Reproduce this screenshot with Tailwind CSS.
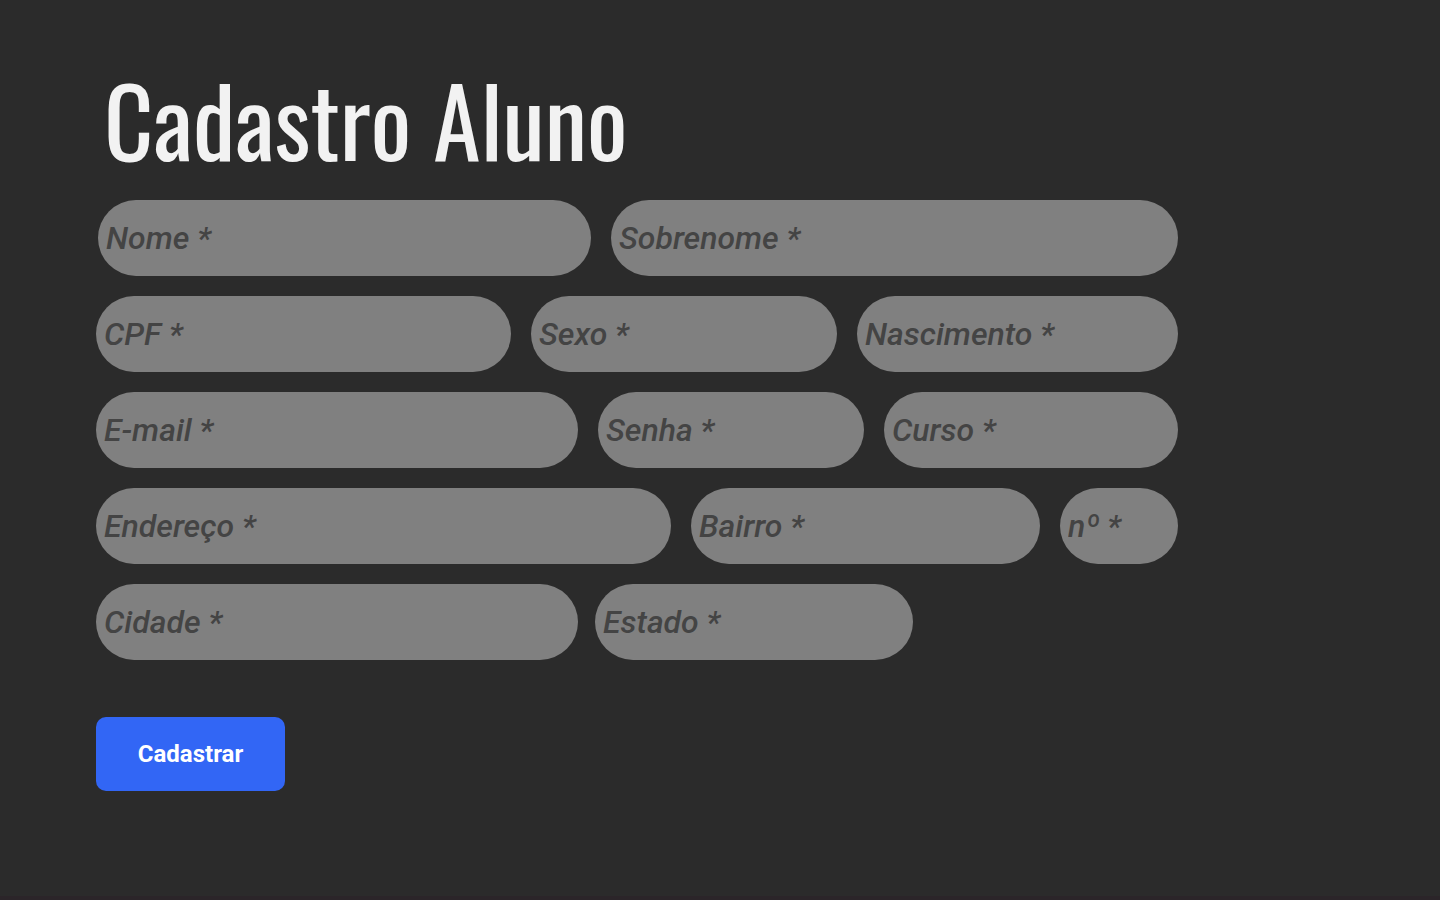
<!DOCTYPE html>
<html lang="pt-BR">
<head>
<meta charset="utf-8">
<meta name="viewport" content="width=device-width, initial-scale=1">
<title>Cadastro Aluno</title>
<script src="https://cdn.jsdelivr.net/npm/@tailwindcss/browser@4"></script>
</head>
<body class="min-h-screen bg-[#2b2b2b] font-['Roboto',sans-serif]">
<main class="min-h-screen border-b-4 border-[#2b2529] px-24 pt-[70px] pb-24">
<h1 class="pl-2 text-8xl leading-[96px] font-normal text-[#f2f2f2] font-['Oswald','Liberation_Sans_Narrow','Liberation_Sans',sans-serif]">Cadastro Aluno</h1>
<form class="mt-[34px] flex max-w-[1082px] flex-col items-start">
<div class="flex w-full flex-col gap-5 [&_input]:h-19 [&_input]:min-w-0 [&_input]:rounded-full [&_input]:bg-[#808080] [&_input]:px-2 [&_input]:text-[32px] [&_input]:font-medium [&_input]:text-[#444444] [&_input]:italic [&_input]:placeholder:text-[#444444]">
<div class="flex gap-5 pl-0.5">
<input type="text" aria-label="Nome" placeholder="Nome *" class="w-[493px]">
<input type="text" aria-label="Sobrenome" placeholder="Sobrenome *" class="flex-1">
</div>
<div class="flex gap-5">
<input type="text" aria-label="CPF" placeholder="CPF *" class="w-[415px]">
<input type="text" aria-label="Sexo" placeholder="Sexo *" class="w-[306px]">
<input type="text" aria-label="Nascimento" placeholder="Nascimento *" class="flex-1">
</div>
<div class="flex gap-5">
<input type="email" aria-label="E-mail" placeholder="E-mail *" class="w-[482px]">
<input type="password" aria-label="Senha" placeholder="Senha *" class="w-[266px]">
<input type="text" aria-label="Curso" placeholder="Curso *" class="flex-1">
</div>
<div class="flex gap-5">
<input type="text" aria-label="Endereço" placeholder="Endereço *" class="w-[575px]">
<input type="text" aria-label="Bairro" placeholder="Bairro *" class="w-[349px]">
<input type="text" aria-label="Número" placeholder="nº *" class="flex-1">
</div>
<div class="flex gap-[17px]">
<input type="text" aria-label="Cidade" placeholder="Cidade *" class="w-[482px]">
<input type="text" aria-label="Estado" placeholder="Estado *" class="w-[318px]">
</div>
</div>
<button type="submit" class="mt-[57px] h-[74px] w-[189px] rounded-[10px] bg-[#3266f5] text-2xl font-bold text-white">Cadastrar</button>
</form>
</main>
</body>
</html>
